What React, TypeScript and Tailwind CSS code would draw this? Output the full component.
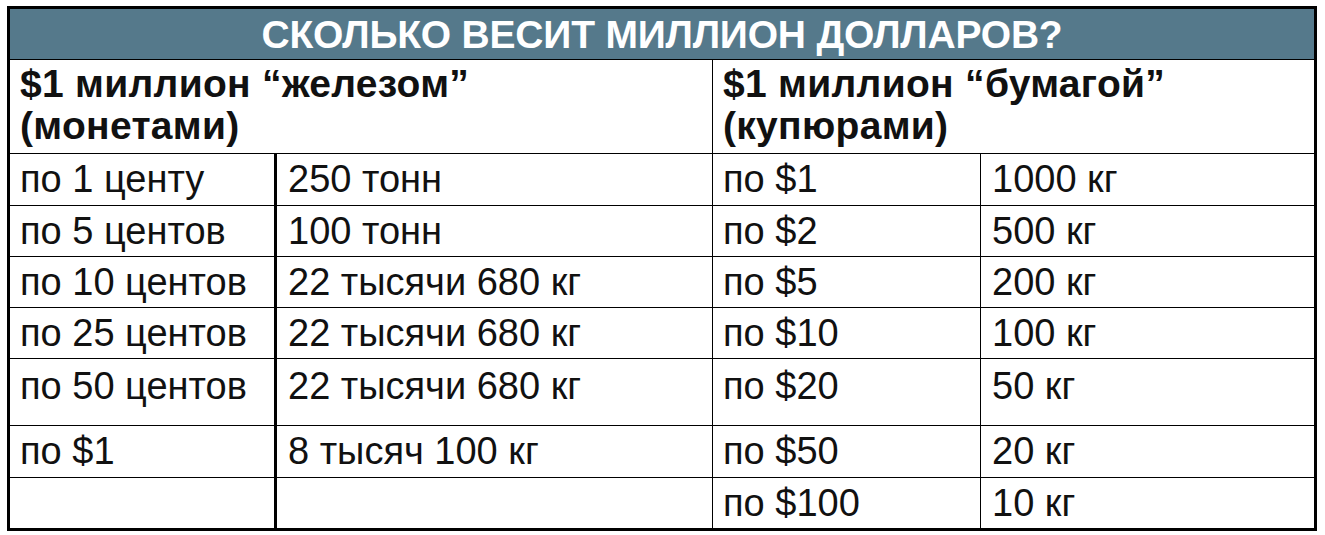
import React from 'react';

const coins = [
  ['по 1 центу', '250 тонн'],
  ['по 5 центов', '100 тонн'],
  ['по 10 центов', '22 тысячи 680 кг'],
  ['по 25 центов', '22 тысячи 680 кг'],
  ['по 50 центов', '22 тысячи 680 кг'],
  ['по $1', '8 тысяч 100 кг'],
  ['', ''],
];

const bills = [
  ['по $1', '1000 кг'],
  ['по $2', '500 кг'],
  ['по $5', '200 кг'],
  ['по $10', '100 кг'],
  ['по $20', '50 кг'],
  ['по $50', '20 кг'],
  ['по $100', '10 кг'],
];

// row heights include the 1px top rule
const rows = [
  { h: 'h-[52px]', pt: 'pt-[6px]' },
  { h: 'h-[51px]', pt: 'pt-[6px]' },
  { h: 'h-[51px]', pt: 'pt-[6px]' },
  { h: 'h-[51px]', pt: 'pt-[6px]' },
  { h: 'h-[67px]', pt: 'pt-[8px]' },
  { h: 'h-[52px]', pt: 'pt-[6px]' },
  { h: 'h-[51px]', pt: 'pt-[6px]' },
];

const App = () => {
  return (
    <div className="bg-white w-[1325px] h-[535px] pt-[6px] pl-[7px]" style={{ fontFamily: '"Liberation Sans", Arial, sans-serif' }}>
      <div className="w-[1310px] border-[3px] border-black text-[#111]">
        <div className="h-[51px] bg-[#55798b] border-b border-black flex items-center justify-center">
          <h1 className="text-white font-bold text-[39px] leading-none tracking-[-0.2px]">
            СКОЛЬКО ВЕСИТ МИЛЛИОН ДОЛЛАРОВ?
          </h1>
        </div>

        <div className="grid grid-cols-[702px_1fr] h-[93px]">
          <div className="pl-[10px] pt-[3px] font-bold text-[39px] leading-[42px] tracking-[0.3px]">
            $1 миллион “железом”
            <br />
            (монетами)
          </div>
          <div className="border-l border-black pl-[10px] pt-[3px] font-bold text-[39px] leading-[42px] tracking-[0.3px]">
            $1 миллион “бумагой”
            <br />
            (купюрами)
          </div>
        </div>

        {rows.map((r, i) => (
          <div
            key={i}
            className={`grid grid-cols-[264px_438px_268px_1fr] border-t border-black text-[38px] leading-none ${r.h}`}
          >
            <div className={`pl-[10px] ${r.pt}`}>{coins[i][0]}</div>
            <div className={`border-l-[3px] border-black pl-[11px] ${r.pt}`}>{coins[i][1]}</div>
            <div className={`border-l border-black pl-[10px] ${r.pt}`}>{bills[i][0]}</div>
            <div className={`border-l border-black pl-[11px] ${r.pt}`}>{bills[i][1]}</div>
          </div>
        ))}
      </div>
    </div>
  );
};

export default App;
